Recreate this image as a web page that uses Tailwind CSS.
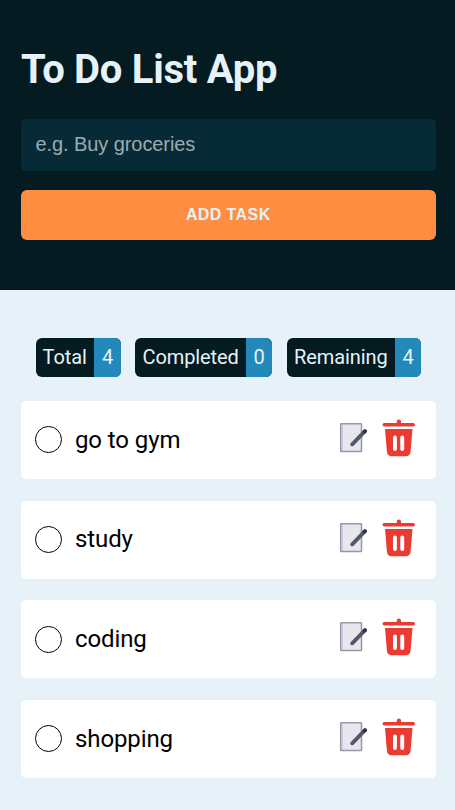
<!DOCTYPE html>
<html lang="en">
<head>
<meta charset="utf-8">
<meta name="viewport" content="width=device-width, initial-scale=1">
<title>To Do List App</title>
<script src="https://cdn.jsdelivr.net/npm/@tailwindcss/browser@4"></script>
</head>
<body class="h-[810px] overflow-hidden bg-[#e6f2f8] font-[Roboto,sans-serif] text-[#e6f2f8]">
<svg class="hidden">
  <symbol id="edit" viewBox="0 0 30 32">
    <rect x="1.7" y="1.7" width="20.800" height="27.800" rx=".6" fill="#e9e6ef" stroke="#9897a8" stroke-width="1.5"/>
    <path d="M3.400 2v27" stroke="#b9b7c7" stroke-width=".6"/>
    <path d="M13.200 22.300L26 9.200" stroke="#515a6b" stroke-width="3.900" stroke-linecap="round"/>
    <path d="M25.500 9.700L26 9.200" stroke="#343047" stroke-width="3.900" stroke-linecap="round"/>
  </symbol>
  <symbol id="trash" viewBox="0 0 34 38">
    <path d="M14.800 4V2.500a2.100 2.100 0 0 1 4.200 0V4H31.200a1.800 1.800 0 0 1 0 3.600H2.300a1.800 1.800 0 0 1 0-3.600Z" fill="#e93b32"/>
    <path fill-rule="evenodd" d="M3 10H30.500L28.600 32.500Q28.100 37.200 23.800 37.200H9.800Q5.400 37.200 4.900 32.500ZM11 18.500V30a1.950 1.950 0 0 0 3.900 0V18.500a1.950 1.950 0 0 0-3.900 0ZM18.300 18.500V30a1.950 1.950 0 0 0 3.900 0V18.500a1.950 1.950 0 0 0-3.900 0Z" fill="#e93b32"/>
  </symbol>
</svg>
<header class="h-[290px] bg-[#041b22] pl-[21px] pr-[19.500px] pt-[46px]">
  <h1 class="h-[48px] text-[40px] font-bold leading-[48px] tracking-[-0.27px]">To Do List App</h1>
  <input aria-label="New task" placeholder="e.g. Buy groceries" class="mt-[25px] block h-[52px] w-full rounded-[5px] bg-[#062b36] px-[14.500px] pb-[2px] font-['Liberation_Sans',Arial,sans-serif] text-[20px] tracking-[-0.08px] placeholder:text-[#9cabb1]">
  <button class="mt-[19px] block h-[49.500px] w-full rounded-[6px] bg-[#ff8e43] font-['Liberation_Sans',Arial,sans-serif] text-[16px] font-bold tracking-[0.4px]">ADD TASK</button>
</header>
<main class="pl-[21px] pr-[19.500px] pt-[48.400px]">
  <div class="flex justify-between pl-[14.500px] pr-[14.500px] text-[20px] leading-[38px] tracking-[-0.09px]">
    <div class="flex h-[38.600px] w-[85.500px] overflow-hidden rounded-[6px] bg-[#041b22]"><span class="grow pl-[7px]">Total</span><span class="w-[27px] bg-[#2389ba] text-center">4</span></div>
    <div class="-ml-px flex h-[38.600px] w-[137px] overflow-hidden rounded-[6px] bg-[#041b22]"><span class="grow pl-[7.500px]">Completed</span><span class="w-[26px] bg-[#2389ba] text-center">0</span></div>
    <div class="flex h-[38.600px] w-[134px] overflow-hidden rounded-[6px] bg-[#041b22]"><span class="grow pl-[7px]">Remaining</span><span class="w-[26px] bg-[#2389ba] text-center">4</span></div>
  </div>
  <ul class="mt-[24px] flex flex-col gap-[21.600px] text-[24px] tracking-[-0.1px] text-black">
    <li class="flex h-[78px] items-center rounded-[5px] bg-white pl-[14.400px] pr-[20px]">
      <span class="size-[27px] rounded-full border border-black"></span><span class="ml-[12.600px] grow">go to gym</span>
      <svg class="mr-[13px] mb-[4px] h-[32px] w-[30px]"><use href="#edit"/></svg><svg class="mb-[4px] h-[38px] w-[34px]"><use href="#trash"/></svg>
    </li>
    <li class="flex h-[78px] items-center rounded-[5px] bg-white pl-[14.400px] pr-[20px]">
      <span class="mb-px size-[27px] rounded-full border border-black"></span><span class="mb-px ml-[12.600px] grow">study</span>
      <svg class="mr-[13px] mb-[4px] h-[32px] w-[30px]"><use href="#edit"/></svg><svg class="mb-[4px] h-[38px] w-[34px]"><use href="#trash"/></svg>
    </li>
    <li class="flex h-[78px] items-center rounded-[5px] bg-white pl-[14.400px] pr-[20px]">
      <span class="size-[27px] rounded-full border border-black"></span><span class="ml-[12.600px] grow">coding</span>
      <svg class="mr-[13px] mb-[4px] h-[32px] w-[30px]"><use href="#edit"/></svg><svg class="mb-[4px] h-[38px] w-[34px]"><use href="#trash"/></svg>
    </li>
    <li class="flex h-[78px] items-center rounded-[5px] bg-white pl-[14.400px] pr-[20px]">
      <span class="size-[27px] rounded-full border border-black"></span><span class="ml-[12.600px] grow">shopping</span>
      <svg class="mr-[13px] mb-[4px] h-[32px] w-[30px]"><use href="#edit"/></svg><svg class="mb-[4px] h-[38px] w-[34px]"><use href="#trash"/></svg>
    </li>
  </ul>
</main>
</body>
</html>
